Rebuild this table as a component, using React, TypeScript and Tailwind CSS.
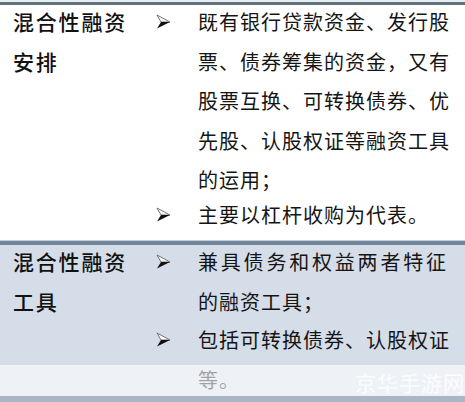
const cjk = "font-['Noto_Sans_CJK_SC','Noto_Sans',sans-serif]";

function Arrow() {
  return (
    <div className="w-[43px] shrink-0 flex items-center h-[39.5px] pl-[1px]">
      <svg width="15" height="15" viewBox="0 0 15 15">
        <polygon points="1,1 14,8 5,8" fill="#fafafa" stroke="#555" strokeWidth="0.8" strokeLinejoin="round" />
        <polygon points="5,8 14,8 1,14.5" fill="#111" />
      </svg>
    </div>
  );
}

function Bullet({ children, className = "" }: { children: React.ReactNode; className?: string }) {
  return (
    <div className={`flex ${className}`}>
      <Arrow />
      <div className="w-[256px] text-[20px] tracking-[1px] text-[#151515]">{children}</div>
    </div>
  );
}

export default function App() {
  return (
    <div className={`relative w-[465px] h-[402px] overflow-hidden bg-white leading-[39.5px] ${cjk}`}>
      <div className="h-[2px] bg-[#e9edf0]" />
      <div className="h-[3px] bg-[#5f747f]" />

      {/* row 1 */}
      <div className="flex h-[235px] bg-white">
        <div className="w-[155px] shrink-0 pl-[13px] -mt-[3px] text-[21px] tracking-[1.8px] font-medium text-[#111]">
          混合性融资
          <br />
          安排
        </div>
        <div className="-mt-[3px]">
          <Bullet>既有银行贷款资金、发行股票、债券筹集的资金，又有股票互换、可转换债券、优先股、认股权证等融资工具的运用；</Bullet>
          <Bullet className="-mt-[4.5px]">主要以杠杆收购为代表。</Bullet>
        </div>
      </div>

      <div className="h-[1px] bg-[#c3cdd8]" />
      <div className="h-[4px] bg-[#6f8599]" />

      {/* row 2 */}
      <div className="flex h-[151px] bg-[#d5dde9]">
        <div className="w-[155px] shrink-0 pl-[13px] -mt-[3px] text-[21px] tracking-[1.8px] font-medium text-[#111]">
          混合性融资
          <br />
          工具
        </div>
        <div className="-mt-[3px]">
          <Bullet>
            <span className="tracking-[2.8px]">兼具债务和权益两者特征</span>
            <br />
            的融资工具；
          </Bullet>
          <Bullet className="-mt-[1px]">包括可转换债券、认股权证等。</Bullet>
        </div>
      </div>

      <div className="h-[6px] bg-[#aab6c4]" />

      {/* watermark band */}
      <div className="absolute left-0 right-0 top-[365px] h-[31px] bg-white/60" />
      <div className="absolute right-0 top-[367px] text-[21px] leading-[30px] tracking-[1px] text-white/80 whitespace-nowrap">
        京华手游网
      </div>
    </div>
  );
}
